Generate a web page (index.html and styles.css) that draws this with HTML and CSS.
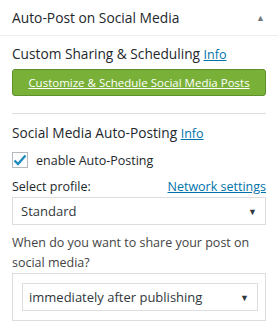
FILE: index.html
```html
<!DOCTYPE html>
<html lang="en">
<head>
  <meta charset="UTF-8">
  <title>Auto-Post on Social Media</title>
  <link rel="stylesheet" href="styles.css">
</head>
<body>
  <div class="postbox">
    <div class="hndle">
      <h2>Auto-Post on Social Media</h2>
      <span class="toggle">&#9650;</span>
    </div>
    <div class="inside">
      <h4 class="sec-title">Custom Sharing &amp; Scheduling <a href="#">Info</a></h4>
      <a class="btn-green" href="#">Customize &amp; Schedule Social Media Posts</a>
      <hr class="sep">
      <h4 class="sec-title">Social Media Auto-Posting <a href="#">Info</a></h4>
      <label class="check-row">
        <span class="checkbox">
          <svg width="14" height="12" viewBox="0 0 14 12"><path d="M1.5 6.5 L5 10 L12.5 1.5" fill="none" stroke="#1e8cbe" stroke-width="2.4"/></svg>
        </span>
        <span class="lbl">enable Auto-Posting</span>
      </label>
      <div class="profile-row">
        <span>Select profile:</span>
        <a href="#">Network settings</a>
      </div>
      <div class="select">Standard<span class="caret">&#9660;</span></div>
      <p class="question">When do you want to share your post on social media?</p>
      <div class="when-box">
        <div class="select inner">immediately after publishing<span class="caret">&#9660;</span></div>
      </div>
    </div>
  </div>
</body>
</html>
```

FILE: styles.css
```css
body {
  margin: 0;
  background: #fff;
  font-family: "Open Sans", "Noto Sans", sans-serif;
  color: #23282d;
}

.hndle {
  height: 35px;
  border-bottom: 1px solid #eee;
  display: flex;
  align-items: center;
  justify-content: space-between;
  padding: 0 13px 0 12px;
}

.hndle h2 {
  margin: 0;
  font-size: 13.8px;
  font-weight: 400;
}

.toggle {
  font-size: 9px;
  color: #72777c;
}

.inside {
  padding: 0 12px;
}

.sec-title {
  margin: 0;
  font-size: 13.7px;
  font-weight: 400;
  line-height: 20px;
}

.inside > .sec-title:first-child {
  margin-top: 8px;
}

.sec-title a, .profile-row a {
  color: #0073aa;
  font-size: 12.5px;
}

.sec-title a {
  line-height: 1;
}

.btn-green {
  display: block;
  margin-top: 5px;
  height: 25px;
  line-height: 25px;
  background: #79b038;
  border: 1px solid #5e902b;
  border-radius: 3px;
  color: #fff;
  font-size: 11.5px;
  text-align: center;
}

.sep {
  margin: 17px 0 0;
  border: 0;
  border-top: 1px solid #ddd;
}

.sep + .sec-title {
  margin-top: 9px;
}

.check-row {
  display: flex;
  align-items: center;
  gap: 8px;
  height: 20px;
  margin-top: 7px;
  font-size: 12.5px;
}

.checkbox {
  width: 14px;
  height: 14px;
  border: 1px solid #b4b9be;
  display: flex;
  align-items: center;
  justify-content: center;
}

.profile-row {
  display: flex;
  justify-content: space-between;
  align-items: flex-end;
  margin-top: 8px;
  font-size: 12.5px;
  line-height: 18px;
}

.select {
  display: flex;
  justify-content: space-between;
  align-items: center;
  height: 26px;
  margin-top: 1px;
  padding: 0 8px 0 8px;
  border: 1px solid #ddd;
  font-size: 13px;
  color: #32373c;
}

.caret {
  font-size: 9px;
  color: #32373c;
}

.question {
  margin: 8px 0 0;
  font-size: 12.5px;
  line-height: 20px;
  color: #444;
}

.when-box {
  margin-top: 0;
  border: 1px solid #ddd;
  padding: 9px 7px 9px 9px;
}

.select.inner {
  margin-top: 0;
  padding-left: 6px;
}
```
